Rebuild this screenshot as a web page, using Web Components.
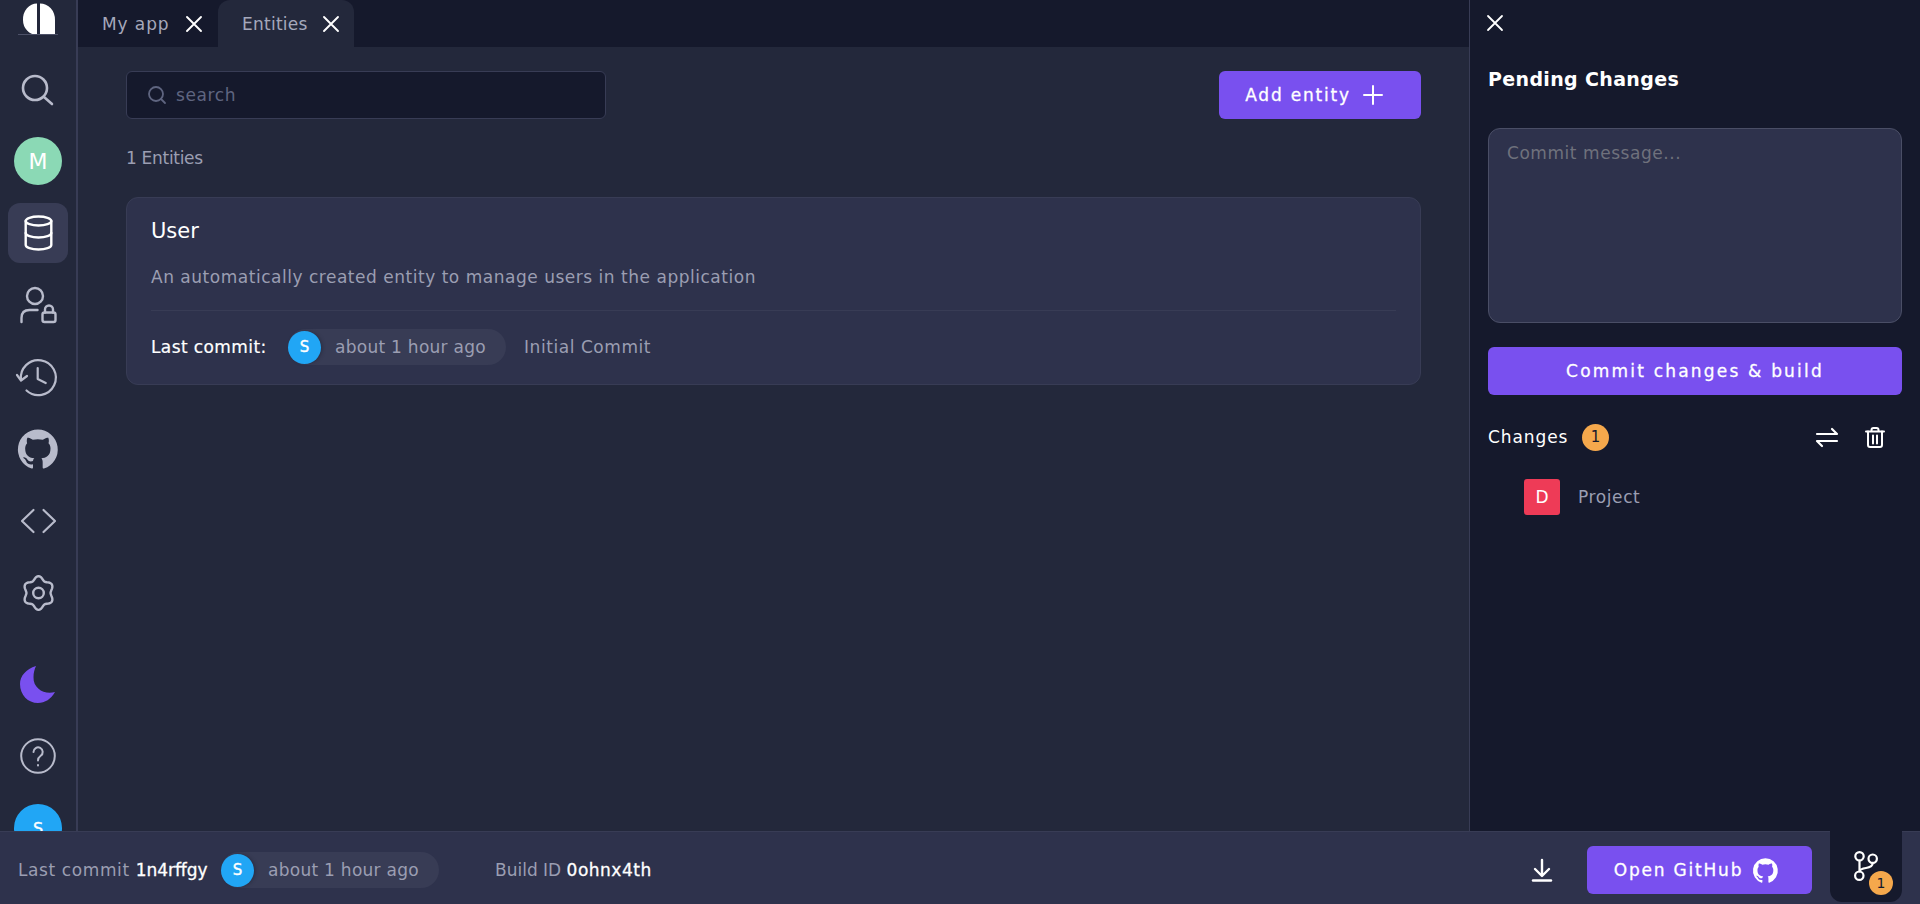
<!DOCTYPE html>
<html>
<head>
<meta charset="utf-8">
<title>Entities</title>
<style>
html, body { margin: 0; height: 100%; }
body { font-family: "DejaVu Sans", "Noto Sans", sans-serif; font-size: 17px; letter-spacing: .5px; background: #23283b; overflow: hidden; }
</style>
</head>
<body>
<app-shell></app-shell>

<script>
// six lobed outline of the settings icon
function gearPath() {
    let d = "";
    for (let i = 0; i < 72; i++) {
        const a = i / 72 * Math.PI * 2;
        const r = 15 + 1.9 * Math.cos(a * 6);
        d += (i ? "L" : "M") + (16.5 + Math.sin(a) * r * .92).toFixed(2) + " " + (18 - Math.cos(a) * r).toFixed(2);
    }
    return d + "z";
}

const ICONS = {
    search: ["0 0 34 34", `<circle cx="14" cy="16" r="12"/><path d="M23 25 31 32"/>`],
    smallsearch: ["0 0 18 18", `<circle cx="8" cy="8" r="7"/><path d="M13 13 17 17"/>`],
    close: ["0 0 16 16", `<path d="M1 1 15 15M15 1 1 15"/>`],
    plus: ["0 0 20 20", `<path d="M10 1v18M1 10h18"/>`],
    database: ["0 0 29 36", `<ellipse cx="14.500" cy="6" rx="12.800" ry="4.500"/><path d="M1.700 6v24c0 2.500 5.700 4.500 12.800 4.500s12.800-2 12.800-4.500V6"/><path d="M1.700 18c0 2.500 5.700 4.500 12.800 4.500s12.800-2 12.800-4.500"/>`],
    userlock: ["0 0 40 40", `<circle cx="17" cy="11" r="8"/><path d="M3.500 37v-4c0-5 3-8 8-8h8"/><rect x="24.500" y="27.500" width="13" height="9.500" rx="2"/><path d="M27 27.500v-3a4 4 0 0 1 8 0v3"/>`],
    history: ["0 0 40 40", `<path d="M3 23A17.500 17.500 0 1 1 8.500 33.500"/><path d="M-1 18 3 23.500 9 19"/><path d="M19.700 11v11l8 4"/>`],
    code: ["0 0 35 24", `<path d="M12.500 1 1 12 12.500 23M22.500 1 34 12 22.500 23"/>`],
    gear: ["0 0 33 36", `<path d="${gearPath()}"/><circle cx="16.500" cy="18" r="5.300"/>`],
    help: ["0 0 36 36", `<circle cx="18" cy="18" r="16.800"/><path d="M13.500 14a4.600 4.600 0 1 1 7.200 3.800c-1.800 1.300-2.700 2.500-2.700 4.700"/><path d="M18 27v.6"/>`],
    swap: ["0 0 22 19", `<path d="M1 6h20l-5-5M21 13H1l5 5"/>`],
    trash: ["0 0 20 21", `<path d="M1 4.500h18M6.500 4.500V3A2 2 0 0 1 8.500 1h3a2 2 0 0 1 2 2v1.500"/><path d="M3 4.500V18a2 2 0 0 0 2 2h10a2 2 0 0 0 2-2V4.500"/><path d="M8 8.500v8M12 8.500v8"/>`],
    download: ["0 0 20 23", `<path d="M10 1v15M3 10l7 7 7-7"/><path d="M1 21.500h18"/>`],
    branch: ["0 0 26 30", `<circle cx="6.500" cy="5.300" r="4.200"/><circle cx="19.700" cy="7.700" r="4.200"/><circle cx="6.300" cy="24.700" r="4.200"/><path d="M6.500 9.500v11M19.700 12c0 3.500-3 4.500-6.700 5-3 .4-5.800 1-6.500 3.500"/>`],
};
const GITHUB = "M12 .3a12 12 0 0 0-3.800 23.400c.6.100.8-.3.800-.6v-2c-3.300.7-4-1.600-4-1.600-.6-1.400-1.400-1.800-1.400-1.800-1.100-.7.100-.7.100-.7 1.200.1 1.800 1.200 1.800 1.200 1.100 1.800 2.800 1.300 3.500 1 .1-.8.400-1.300.8-1.600-2.700-.3-5.500-1.300-5.500-5.900 0-1.300.5-2.400 1.200-3.200-.1-.3-.5-1.500.1-3.200 0 0 1-.3 3.300 1.200a11.500 11.500 0 0 1 6 0c2.300-1.500 3.300-1.200 3.300-1.200.6 1.700.2 2.900.1 3.200.8.800 1.200 1.900 1.200 3.200 0 4.600-2.800 5.600-5.500 5.900.4.400.8 1.100.8 2.200v3.300c0 .3.2.7.8.6A12 12 0 0 0 12 .3z";

class AppIcon extends HTMLElement {
    connectedCallback() {
        const name = this.getAttribute("name");
        const w = this.getAttribute("w") || 24;
        const h = this.getAttribute("h") || w;
        const stroke = this.getAttribute("stroke") || 2;
        const color = this.getAttribute("color") || "currentColor";
        const box = name == "github" ? "0 0 24 24" : ICONS[name][0];
        const body = name == "github"
            ? `<path fill="${color}" fill-rule="evenodd" d="${GITHUB}"/>`
            : `<g fill="none" stroke="${color}" stroke-width="${stroke}" stroke-linecap="round" stroke-linejoin="round">${ICONS[name][1]}</g>`;
        this.attachShadow({mode: "open"});
        this.shadowRoot.innerHTML = `
            <style>:host { display: inline-flex; flex: none; } svg { display: block; overflow: visible; }</style>
            <svg width="${w}" height="${h}" viewBox="${box}">${body}</svg>
        `;
    }
}
customElements.define("app-icon", AppIcon);

class SideItem extends HTMLElement {
    constructor() {
        super();
        this.attachShadow({mode: "open"});
        this.shadowRoot.innerHTML = `
            <style>
                :host { display: flex; width: 60px; height: 60px; flex: none; align-items: center; justify-content: center; border-radius: 12px; color: #b8bbcb; }
                :host([active]) { background: #383c55; color: #fff; }
            </style>
            <slot></slot>
        `;
    }
}
customElements.define("side-item", SideItem);

class UserAvatar extends HTMLElement {
    constructor() {
        super();
        this.attachShadow({mode: "open"});
        this.shadowRoot.innerHTML = `
            <style>
                :host { display: flex; width: var(--size, 33px); height: var(--size, 33px); flex: none; align-items: center; justify-content: center; border-radius: 50%; background: var(--bg, #21a6f5); color: #fff; font-size: var(--fs, 15px); letter-spacing: 0; -webkit-text-stroke: var(--weight, .4px); }
            </style>
            <slot></slot>
        `;
    }
}
customElements.define("user-avatar", UserAvatar);

class CommitChip extends HTMLElement {
    constructor() {
        super();
        this.attachShadow({mode: "open"});
        this.shadowRoot.innerHTML = `
            <style>
                :host { display: inline-flex; align-items: center; height: 36px; width: 218px; box-sizing: border-box; border-radius: 18px; background: #383c55; color: #9b9eb2; letter-spacing: .27px; flex: none; }
                user-avatar { box-shadow: 2px 0 3px #23283b80; }
                span { margin-left: 14px; white-space: nowrap; }
            </style>
            <user-avatar>S</user-avatar><span><slot></slot></span>
        `;
    }
}
customElements.define("commit-chip", CommitChip);

class PrimaryButton extends HTMLElement {
    constructor() {
        super();
        this.attachShadow({mode: "open"});
        this.shadowRoot.innerHTML = `
            <style>
                :host { display: flex; height: 48px; box-sizing: border-box; align-items: center; justify-content: center; gap: 12px; border-radius: 6px; background: #7950ef; color: #fff; letter-spacing: 1.8px; -webkit-text-stroke: .3px; white-space: nowrap; }
            </style>
            <slot></slot>
        `;
    }
}
customElements.define("primary-button", PrimaryButton);

class TabBar extends HTMLElement {
    constructor() {
        super();
        this.attachShadow({mode: "open"});
        this.shadowRoot.innerHTML = `
            <style>
                :host { display: flex; height: 47px; flex: none; background: #15192c; padding-left: 24px; }
                .tab { display: flex; align-items: center; justify-content: space-between; height: 47px; box-sizing: border-box; width: 100px; margin-right: 16px; color: #a5a8bb; letter-spacing: .9px; white-space: nowrap; }
                .tab.on { width: 136px; padding: 0 15px 0 24px; margin: 0; background: #23283b; border-radius: 12px 12px 0 0; letter-spacing: .26px; }
            </style>
            <div class="tab">My app <app-icon name="close" w="16" stroke="1.900" color="#fff"></app-icon></div>
            <div class="tab on">Entities <app-icon name="close" w="16" stroke="1.900" color="#fff"></app-icon></div>
        `;
    }
}
customElements.define("tab-bar", TabBar);

class SideBar extends HTMLElement {
    constructor() {
        super();
        this.attachShadow({mode: "open"});
        this.shadowRoot.innerHTML = `
            <style>
                :host { display: flex; flex-direction: column; align-items: center; width: 76px; flex: none; gap: 12px; border-right: 2px solid #383c55; overflow: hidden; }
                .logo { height: 47px; flex: none; }
                .spacer { height: 7px; flex: none; }
                user-avatar { --size: 48px; }
                .m { --bg: #8bd9b5; --fs: 22px; --weight: 0; }
                .s { --fs: 16px; }
            </style>
            <svg class="logo" width="40" height="47" viewBox="0 0 40 47">
                <path fill="#fff" d="M19 3.500A14 16 0 0 0 5 20 14 15 0 0 0 19 35z"/>
                <path fill="#fff" d="M22 3.500A15 16 0 0 1 37 20V35H22z"/>
                <path d="M0 34.500H40" stroke="#4d5168" stroke-width="1"/>
            </svg>
            <side-item><app-icon name="search" w="34" stroke="2.600"></app-icon></side-item>
            <side-item><user-avatar class="m">M</user-avatar></side-item>
            <side-item active><app-icon name="database" w="29" h="36" stroke="2.400"></app-icon></side-item>
            <side-item><app-icon name="userlock" w="40" stroke="2.400"></app-icon></side-item>
            <side-item><app-icon name="history" w="40" stroke="2.200"></app-icon></side-item>
            <side-item><app-icon name="github" w="40"></app-icon></side-item>
            <side-item><app-icon name="code" w="35" h="24" stroke="2.200"></app-icon></side-item>
            <side-item><app-icon name="gear" w="33" h="36" stroke="2.400"></app-icon></side-item>
            <div class="spacer"></div>
            <side-item>
                <svg width="36" height="38" viewBox="0 0 36 38"><path fill="#7950ef" d="M16 1C6 4 0 11 0 19 0 30 8 38 18 38 25 38 31 34 35 27 25 30 13 24 13.500 12 13.500 8 14.500 4 16 1z"/></svg>
            </side-item>
            <side-item><app-icon name="help" w="36" stroke="2"></app-icon></side-item>
            <side-item><user-avatar class="s">S</user-avatar></side-item>
        `;
    }
}
customElements.define("side-bar", SideBar);

class SearchBox extends HTMLElement {
    constructor() {
        super();
        this.attachShadow({mode: "open"});
        this.shadowRoot.innerHTML = `
            <style>
                :host { display: flex; align-items: center; gap: 10px; width: 480px; height: 48px; box-sizing: border-box; padding-left: 21px; background: #15192c; border: 1px solid #383c55; border-radius: 6px; color: #5f6580; letter-spacing: .6px; }
            </style>
            <app-icon name="smallsearch" w="18" stroke="1.800"></app-icon>
            <slot></slot>
        `;
    }
}
customElements.define("search-box", SearchBox);

class EntityCard extends HTMLElement {
    constructor() {
        super();
        this.attachShadow({mode: "open"});
        this.shadowRoot.innerHTML = `
            <style>
                :host { display: block; height: 188px; box-sizing: border-box; padding: 0 24px; background: #2e324c; border: 1px solid #383c55; border-radius: 12px; }
                .title { color: #fff; font-size: 21px; line-height: 28px; margin-top: 19px; letter-spacing: 0; }
                .desc { color: #9b9eb2; line-height: 26px; margin-top: 19px; padding-bottom: 20px; border-bottom: 1px solid #383c55; letter-spacing: .52px; }
                .row { display: flex; align-items: center; height: 36px; margin-top: 18px; color: #9b9eb2; letter-spacing: .56px; }
                .label { color: #fff; width: 137px; flex: none; letter-spacing: .4px; -webkit-text-stroke: .2px; }
                commit-chip { margin-right: 18px; }
            </style>
            <div class="title"><slot name="title"></slot></div>
            <div class="desc"><slot name="desc"></slot></div>
            <div class="row">
                <span class="label">Last commit:</span>
                <commit-chip>about 1 hour ago</commit-chip>
                <slot name="message"></slot>
            </div>
        `;
    }
}
customElements.define("entity-card", EntityCard);

class EntityPage extends HTMLElement {
    constructor() {
        super();
        this.attachShadow({mode: "open"});
        this.shadowRoot.innerHTML = `
            <style>
                :host { display: flex; flex-direction: column; flex: 1; min-width: 0; }
                .body { padding: 24px 48px; }
                .top { display: flex; justify-content: space-between; }
                .count { color: #9b9eb2; line-height: 24px; margin: 27px 0 27px; letter-spacing: -.3px; }
                primary-button { width: 202px; padding-right: 12px; }
            </style>
            <tab-bar></tab-bar>
            <div class="body">
                <div class="top">
                    <search-box>search</search-box>
                    <primary-button>Add entity <app-icon name="plus" w="20" stroke="2"></app-icon></primary-button>
                </div>
                <div class="count">1 Entities</div>
                <entity-card>
                    <span slot="title">User</span>
                    <span slot="desc">An automatically created entity to manage users in the application</span>
                    <span slot="message">Initial Commit</span>
                </entity-card>
            </div>
        `;
    }
}
customElements.define("entity-page", EntityPage);

class PendingPanel extends HTMLElement {
    constructor() {
        super();
        this.attachShadow({mode: "open"});
        this.shadowRoot.innerHTML = `
            <style>
                :host { display: block; width: 451px; flex: none; box-sizing: border-box; padding: 15px 18px 0 18px; background: #15192c; border-left: 1px solid #383c55; color: #fff; }
                .close { margin-left: -1px; display: flex; }
                h2 { margin: 32px 0 0; font-size: 19px; font-weight: 700; line-height: 32px; letter-spacing: .35px; }
                .msg { height: 195px; box-sizing: border-box; margin-top: 33px; padding: 11px 18px; background: #2e324c; border: 1px solid #4a4e66; border-radius: 12px; color: #6f717c; line-height: 26px; letter-spacing: .55px; }
                primary-button { margin-top: 24px; letter-spacing: 2.2px; }
                .changes { display: flex; align-items: center; height: 28px; margin-top: 28px; }
                .name { width: 94px; letter-spacing: .9px; }
                .badge { display: flex; align-items: center; justify-content: center; width: 27px; height: 27px; border-radius: 50%; background: #f5a84c; color: #15192c; font-size: 15px; letter-spacing: 0; }
                .tools { margin-left: auto; display: flex; gap: 27px; padding-right: 17px; align-items: center; }
                .item { display: flex; align-items: center; gap: 18px; margin: 28px 0 0 36px; color: #9b9eb2; letter-spacing: .6px; }
                .d { display: flex; align-items: center; justify-content: center; width: 36px; height: 36px; border-radius: 3px; background: #ee3b57; color: #fff; letter-spacing: 0; }
            </style>
            <div class="close"><app-icon name="close" w="16" stroke="1.800" color="#fff"></app-icon></div>
            <h2>Pending Changes</h2>
            <div class="msg">Commit message...</div>
            <primary-button>Commit changes &amp; build</primary-button>
            <div class="changes">
                <span class="name">Changes</span><span class="badge">1</span>
                <div class="tools">
                    <app-icon name="swap" w="22" h="19" stroke="2.200" color="#fff"></app-icon>
                    <app-icon name="trash" w="20" h="21" stroke="2" color="#fff"></app-icon>
                </div>
            </div>
            <div class="item"><span class="d">D</span> Project</div>
        `;
    }
}
customElements.define("pending-panel", PendingPanel);

class StatusBar extends HTMLElement {
    constructor() {
        super();
        this.attachShadow({mode: "open"});
        this.shadowRoot.innerHTML = `
            <style>
                :host { display: flex; align-items: center; height: 73px; flex: none; box-sizing: border-box; padding: 4px 18px 0; background: #2e324c; border-top: 1px solid #383c55; color: #9b9eb2; white-space: nowrap; }
                b { color: #fff; font-weight: 400; -webkit-text-stroke: .3px; letter-spacing: 0; }
                .commit { width: 203px; flex: none; letter-spacing: .6px; }
                .build { margin-left: 56px; letter-spacing: 0; }
                .build b { letter-spacing: .5px; }
                .dl { margin-left: auto; color: #fff; display: flex; margin-right: 35px; }
                primary-button { width: 225px; gap: 10px; padding-right: 7px; }
                .branch { position: relative; display: flex; align-items: center; justify-content: center; align-self: flex-start; margin: -5px 0 0 18px; width: 72px; height: 71px; padding-bottom: 2px; box-sizing: border-box; background: #15192c; border-radius: 0 0 12px 12px; }
                .dot { position: absolute; left: 39px; top: 40px; display: flex; align-items: center; justify-content: center; width: 24px; height: 24px; border-radius: 50%; background: #f5a84c; color: #15192c; font-size: 14px; letter-spacing: 0; }
            </style>
            <span class="commit">Last commit <b>1n4rffgy</b></span>
            <commit-chip>about 1 hour ago</commit-chip>
            <span class="build">Build ID <b>0ohnx4th</b></span>
            <span class="dl"><app-icon name="download" w="20" h="23" stroke="2.400"></app-icon></span>
            <primary-button>Open GitHub <app-icon name="github" w="25" color="#fff"></app-icon></primary-button>
            <div class="branch">
                <app-icon name="branch" w="26" h="30" stroke="2.200" color="#fff"></app-icon>
                <span class="dot">1</span>
            </div>
        `;
    }
}
customElements.define("status-bar", StatusBar);

class AppShell extends HTMLElement {
    constructor() {
        super();
        this.attachShadow({mode: "open"});
        this.shadowRoot.innerHTML = `
            <style>
                :host { display: flex; flex-direction: column; height: 904px; overflow: hidden; }
                .top { display: flex; flex: 1; min-height: 0; }
            </style>
            <div class="top">
                <side-bar></side-bar>
                <entity-page></entity-page>
                <pending-panel></pending-panel>
            </div>
            <status-bar></status-bar>
        `;
    }
}
customElements.define("app-shell", AppShell);
</script>
</body>
</html>
